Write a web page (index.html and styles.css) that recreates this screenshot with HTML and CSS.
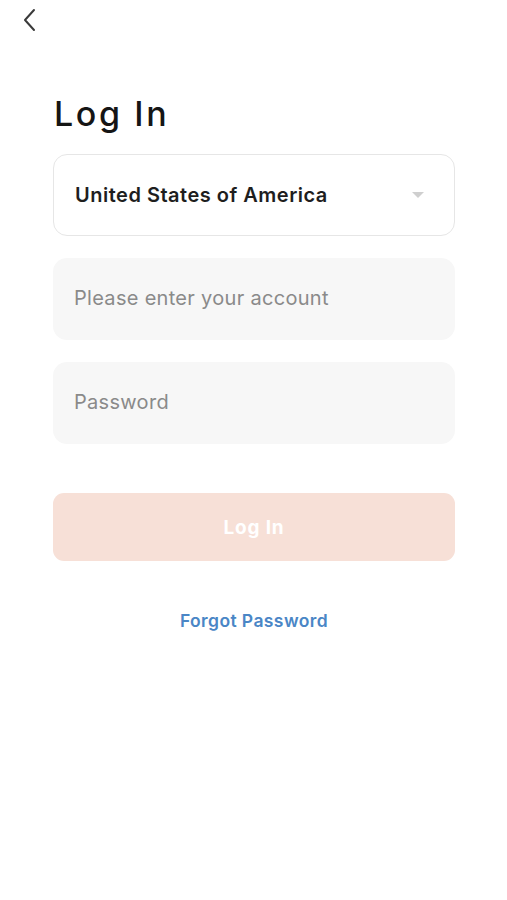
FILE: index.html
```html
<!DOCTYPE html>
<html lang="en">

<head>
  <meta charset="UTF-8">
  <meta name="viewport" content="width=device-width, initial-scale=1.0, user-scalable=no">
  <link rel="stylesheet" href="styles.css">
  <title>Log In</title>
</head>

<body>
  <div class="page">
    <div class="nav">
      <button class="back" aria-label="back">
        <svg width="14" height="24" viewBox="0 0 14 24">
          <path d="M12 2 L3 12 L12 22" fill="none" stroke="#3a3a3a" stroke-width="2" stroke-linecap="round" stroke-linejoin="round" />
        </svg>
      </button>
    </div>
    <div class="form">
      <h1 class="title">Log In</h1>
      <div class="field country">
        <span>United States of America</span>
        <span class="caret"></span>
      </div>
      <div class="field input">Please enter your account</div>
      <div class="field input">Password</div>
      <button class="submit">Log In</button>
      <a class="forgot" href="#">Forgot Password</a>
    </div>
  </div>
</body>

</html>
```

FILE: styles.css
```css
html,
body {
  margin: 0;
  height: 100%;
  background: #fff;
  font-family: Inter, "Noto Sans", sans-serif;
}

.page {
  display: flex;
  flex-direction: column;
}

.nav {
  height: 40px;
  padding: 6px 0 0 20px;
}

.back {
  border: none;
  background: none;
  padding: 2px;
  cursor: pointer;
}

.form {
  display: flex;
  flex-direction: column;
  padding: 0 52px 0 53px;
}

.title {
  margin: 48px 0 20px 1px;
  font-size: 34px;
  font-weight: 500;
  letter-spacing: 2.6px;
  color: #151515;
  line-height: 40px;
}

.field {
  box-sizing: border-box;
  height: 82px;
  border-radius: 14px;
  display: flex;
  align-items: center;
  padding: 0 30px 0 21px;
  font-size: 20px;
  margin-bottom: 22px;
}

.country {
  border: 1px solid #e6e6e6;
  justify-content: space-between;
  font-weight: 600;
  letter-spacing: 0.5px;
  color: #1e1e1e;
}

.caret {
  width: 0;
  height: 0;
  border-left: 6px solid transparent;
  border-right: 6px solid transparent;
  border-top: 6px solid #cfcfcf;
}

.input {
  background: #f7f7f7;
  color: #8a8a8a;
  letter-spacing: 0.3px;
  padding-bottom: 2px;
}

.submit {
  margin-top: 27px;
  height: 68px;
  border: none;
  border-radius: 11px;
  background: #f7e0d7;
  color: #fff;
  font-family: inherit;
  font-size: 19px;
  font-weight: 700;
  letter-spacing: 0.8px;
}

.forgot {
  align-self: center;
  margin-top: 49px;
  color: #4a86c6;
  font-size: 17.5px;
  font-weight: 600;
  letter-spacing: 0.4px;
  text-decoration: none;
}
```
